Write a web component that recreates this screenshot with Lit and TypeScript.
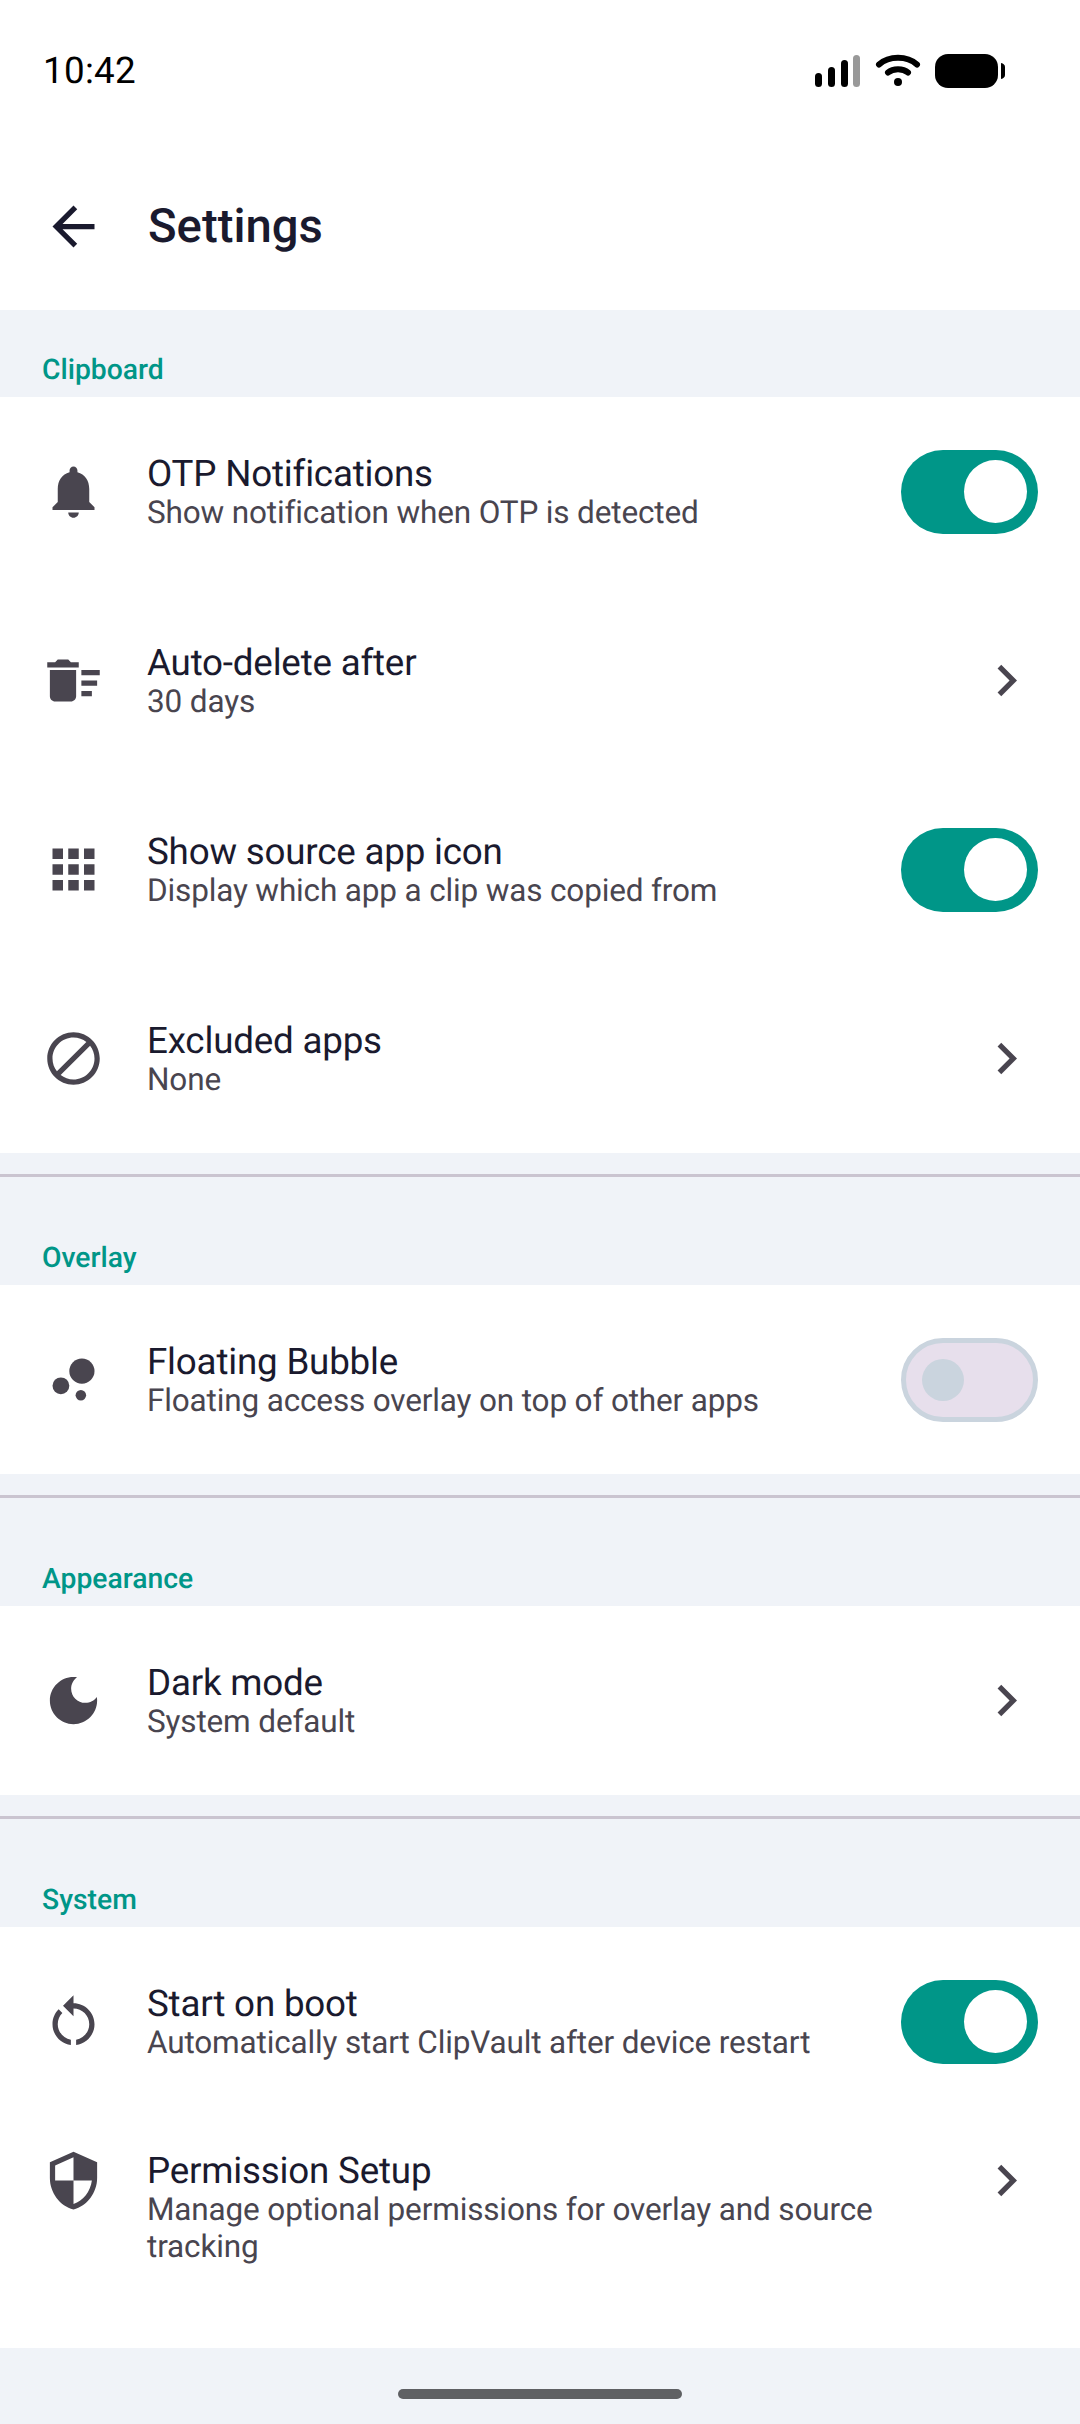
import { LitElement, html, css, svg } from "lit";
import { customElement } from "lit/decorators.js";

const ICONS: Record<string, unknown> = {
  bell: svg`<path d="M12 22c1.1 0 2-.9 2-2h-4c0 1.1.89 2 2 2zm6-6v-5c0-3.07-1.64-5.64-4.5-6.32V4c0-.83-.67-1.5-1.5-1.5s-1.5.67-1.5 1.5v.68C7.63 5.36 6 7.92 6 11v5l-2 2v1h16v-1l-2-2z"/>`,
  sweep: svg`<path d="M15 16h4v2h-4zm0-8h7v2h-7zm0 4h6v2h-6zM3 18c0 1.1.9 2 2 2h6c1.1 0 2-.9 2-2V8H3v10zM14 5h-3l-1-1H6L5 5H2v2h12z"/>`,
  apps: svg`<path d="M4 8h4V4H4v4zm6 12h4v-4h-4v4zm-6 0h4v-4H4v4zm0-6h4v-4H4v4zm6 0h4v-4h-4v4zm6-10v4h4V4h-4zm-6 4h4V4h-4v4zm6 6h4v-4h-4v4zm0 6h4v-4h-4v4z"/>`,
  block: svg`<path d="M12 2C6.48 2 2 6.48 2 12s4.48 10 10 10 10-4.48 10-10S17.52 2 12 2zM4 12c0-4.42 3.58-8 8-8 1.85 0 3.55.63 4.9 1.69L5.69 16.9C4.63 15.55 4 13.85 4 12zm8 8c-1.85 0-3.55-.63-4.9-1.69L18.31 7.1C19.37 8.45 20 10.15 20 12c0 4.42-3.58 8-8 8z"/>`,
  bubble: svg`<circle cx="7.2" cy="14.4" r="3.2"/><circle cx="14.8" cy="18" r="2"/><circle cx="15.2" cy="8.8" r="4.8"/>`,
  moon: svg`<path d="M12 3c-4.97 0-9 4.03-9 9s4.03 9 9 9 9-4.03 9-9c0-.46-.04-.92-.1-1.36-.98 1.37-2.58 2.26-4.4 2.26-2.98 0-5.4-2.42-5.4-5.4 0-1.81.89-3.42 2.26-4.4-.44-.06-.9-.1-1.36-.1z"/>`,
  restart: svg`<path d="M12 5V2L8 6l4 4V7c3.31 0 6 2.69 6 6 0 2.97-2.17 5.43-5 5.91v2.02c3.95-.49 7-3.85 7-7.93 0-4.42-3.58-8-8-8zm-6 8c0-1.65.67-3.15 1.76-4.24L6.34 7.34C4.9 8.79 4 10.79 4 13c0 4.08 3.05 7.44 7 7.93v-2.02c-2.83-.48-5-2.94-5-5.91z"/>`,
  shield: svg`<path d="M12 1L3 5v6c0 5.55 3.84 10.74 9 12 5.16-1.26 9-6.45 9-12V5l-9-4zm0 10.99h7c-.53 4.12-3.28 7.79-7 8.94V12H5V6.3l7-3.11v8.8z"/>`,
  chevron: svg`<path d="M10 6L8.59 7.41 13.17 12l-4.58 4.59L10 18l6-6z"/>`,
  back: svg`<path d="M20 11H7.83l5.59-5.59L12 4l-8 8 8 8 1.41-1.41L7.83 13H20v-2z"/>`,
};

type Row = { icon: string; title: string; sub: string; ctl: "on" | "off" | "chev"; tall?: boolean };
type Section = { label: string; rows: Row[] };

const SECTIONS: Section[] = [
  {
    label: "Clipboard",
    rows: [
      { icon: "bell", title: "OTP Notifications", sub: "Show notification when OTP is detected", ctl: "on" },
      { icon: "sweep", title: "Auto-delete after", sub: "30 days", ctl: "chev" },
      { icon: "apps", title: "Show source app icon", sub: "Display which app a clip was copied from", ctl: "on" },
      { icon: "block", title: "Excluded apps", sub: "None", ctl: "chev" },
    ],
  },
  {
    label: "Overlay",
    rows: [{ icon: "bubble", title: "Floating Bubble", sub: "Floating access overlay on top of other apps", ctl: "off" }],
  },
  {
    label: "Appearance",
    rows: [{ icon: "moon", title: "Dark mode", sub: "System default", ctl: "chev" }],
  },
  {
    label: "System",
    rows: [
      { icon: "restart", title: "Start on boot", sub: "Automatically start ClipVault after device restart", ctl: "on" },
      { icon: "shield", title: "Permission Setup", sub: "Manage optional permissions for overlay and source tracking", ctl: "chev", tall: true },
    ],
  },
];

@customElement("app-root")
export class AppRoot extends LitElement {
  static styles = css`
    :host {
      display: block;
      width: 1080px;
      height: 2424px;
      background: #f0f3f8;
      font-family: Roboto, "Liberation Sans", sans-serif;
      text-rendering: geometricPrecision;
      overflow: hidden;
    }
    .top { background: #fff; height: 310px; display: flex; flex-direction: column; }
    .status {
      height: 142px;
      display: flex;
      justify-content: space-between;
      align-items: flex-start;
      padding: 0 75px 0 43px;
      box-sizing: border-box;
    }
    .time { font-size: 36.75px; line-height: 43px; margin-top: 49px; color: #000; letter-spacing: 0.3px; }
    .sysicons { display: block; margin-top: 54px; }
    .bar { height: 168px; display: flex; align-items: center; padding-left: 42px; gap: 43px; }
    .bar svg { width: 63px; height: 63px; fill: #1a1a2e; flex: none; }
    .bar h1 {
      margin: 0;
      font-size: 47.25px;
      font-weight: 500;
      color: #1a1a2e;
      line-height: 56px;
    }
    .label {
      height: 87px;
      box-sizing: border-box;
      display: flex;
      align-items: flex-end;
      padding: 0 42px 6px;
      font-size: 28.3px;
      font-weight: 500;
      line-height: 42px;
      color: #009688;
    }
    .rows { background: #fff; }
    .row {
      height: 189px;
      box-sizing: border-box;
      display: flex;
      align-items: center;
      padding: 0 42px;
      gap: 42px;
    }
    .row.tall { height: 232px; align-items: flex-start; padding-top: 32px; }
    .icon { width: 63px; height: 63px; fill: #49454f; flex: none; display: block; }
    .tall .icon { margin-top: 1px; }
    .text { flex: 1; min-width: 0; padding-top: 2px; }
    .title { font-size: 36.75px; line-height: 42px; color: #1a1a2e; letter-spacing: -0.2px; }
    .sub { font-size: 31.5px; line-height: 36.75px; color: #49454f; letter-spacing: -0.15px; }
    .switch {
      width: 137px;
      height: 84px;
      border-radius: 42px;
      box-sizing: border-box;
      display: flex;
      align-items: center;
      flex: none;
    }
    .switch.on { background: #009688; justify-content: flex-end; padding: 0 11px; }
    .switch.on i { width: 63px; height: 63px; background: #fff; }
    .switch.off { background: #e7dfec; border: 5.25px solid #cad4de; padding: 0 15.75px; }
    .switch.off i { width: 42px; height: 42px; background: #cad4de; }
    .switch i { display: block; border-radius: 50%; }
    .divider { height: 3px; background: #cac4d0; margin: 21px 0; }
    .footer { display: flex; justify-content: center; padding-top: 41px; }
    .pill { width: 284px; height: 10px; border-radius: 5px; background: #5f6063; }
  `;

  private ico(name: string) {
    return html`<svg class="icon" viewBox="0 0 24 24">${ICONS[name]}</svg>`;
  }

  private row(r: Row) {
    return html`<div class="row ${r.tall ? "tall" : ""}">
      ${this.ico(r.icon)}
      <div class="text">
        <div class="title">${r.title}</div>
        <div class="sub">${r.sub}</div>
      </div>
      ${r.ctl === "chev"
        ? this.ico("chevron")
        : html`<div class="switch ${r.ctl}"><i></i></div>`}
    </div>`;
  }

  render() {
    return html`
      <div class="top">
        <div class="status">
          <span class="time">10:42</span>
          <svg class="sysicons" width="190" height="34" viewBox="0 0 190 34">
            <rect x="0" y="19" width="7" height="14" rx="3.5" fill="#000"/>
            <rect x="13" y="13" width="7" height="20" rx="3.5" fill="#000"/>
            <rect x="26" y="6" width="7" height="27" rx="3.5" fill="#000"/>
            <rect x="38" y="1" width="7" height="32" rx="3.5" fill="#999"/>
            <path d="M64 10.5C74 1.5 92 1.5 102 10.5" fill="none" stroke="#000" stroke-width="6" stroke-linecap="round"/>
            <path d="M73 18.5C78 14 88 14 93 18.5" fill="none" stroke="#000" stroke-width="6" stroke-linecap="round"/>
            <circle cx="83" cy="28" r="4" fill="#000"/>
            <rect x="120" y="0" width="63" height="34" rx="13" fill="#000"/>
            <path d="M186 9c2.5 .5 4 2 4 4v8c0 2-1.5 3.5-4 4z" fill="#000"/>
          </svg>
        </div>
        <div class="bar">
          <svg viewBox="0 0 24 24">${ICONS.back}</svg>
          <h1>Settings</h1>
        </div>
      </div>
      ${SECTIONS.map(
        (s, i) => html`
          ${i > 0 ? html`<div class="divider"></div>` : ""}
          <div class="label">${s.label}</div>
          <div class="rows">${s.rows.map((r) => this.row(r))}</div>
        `
      )}
      <div class="footer"><div class="pill"></div></div>
    `;
  }
}
